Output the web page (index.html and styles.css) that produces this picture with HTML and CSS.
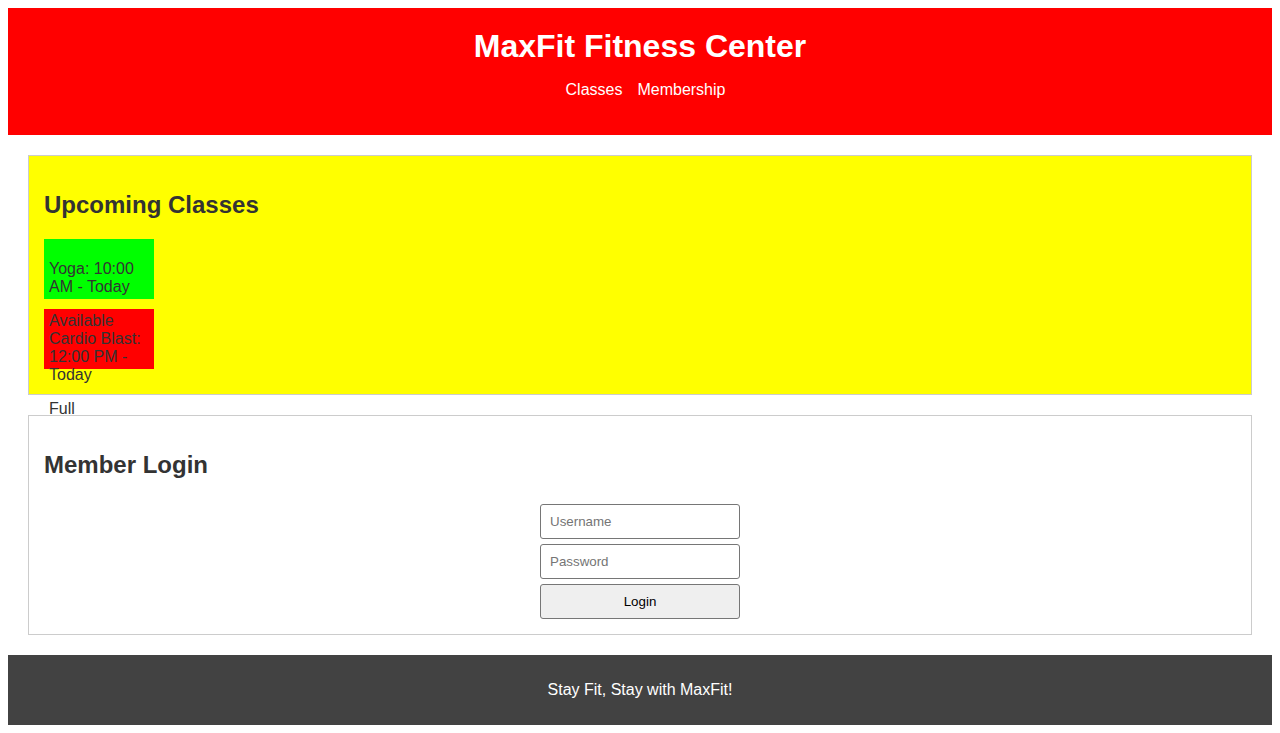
FILE: index.html
```html
<!DOCTYPE html>
<html lang="en">
<head>
<meta charset="utf-8">
<title>MaxFit Fitness Center</title>
<link rel="stylesheet" href="styles.css">
</head>
<body>
<header class="site-header">
  <h1 class="site-title">MaxFit Fitness Center</h1>
  <nav>
    <ul class="nav-list">
      <li><a href="#classes">Classes</a></li>
      <li><a href="#membership">Membership</a></li>
    </ul>
  </nav>
</header>
<main>
  <section class="panel panel-classes" id="classes">
    <h2 class="panel-title">Upcoming Classes</h2>
    <div class="class-card card-available">
      <p>Yoga: 10:00 AM - Today</p>
      <p>Available</p>
    </div>
    <div class="class-card card-full">
      <p>Cardio Blast: 12:00 PM - Today</p>
      <p>Full</p>
    </div>
  </section>
  <section class="panel panel-login" id="membership">
    <h2 class="panel-title">Member Login</h2>
    <form class="login-form">
      <input class="field" type="text" placeholder="Username">
      <input class="field" type="password" placeholder="Password">
      <button class="field login-btn" type="button">Login</button>
    </form>
  </section>
</main>
<footer class="site-footer">
  <p>Stay Fit, Stay with MaxFit!</p>
</footer>
</body>
</html>
```
FILE: styles.css
```css
body {
  margin: 8px;
  font-family: "Liberation Sans", Arial, sans-serif;
  font-size: 16px;
  color: #333;
}

.site-header {
  background: #ff0000;
  color: #fff;
  text-align: center;
  padding: 20px;
}

.site-title {
  margin: 0;
  font-size: 32px;
  font-weight: bold;
  line-height: 37px;
}

.nav-list {
  list-style: none;
  margin: 16px 0;
  padding: 0 0 0 11px;
  display: flex;
  justify-content: center;
  gap: 15px;
}

.nav-list a {
  color: #fff;
  text-decoration: none;
}

.panel {
  margin: 20px;
  padding: 15px;
  border: 1px solid #ccc;
}

.panel-classes {
  background: #ffff00;
}

.panel-login {
  background: #fff;
}

.panel-title {
  font-size: 24px;
  margin: 20px 0;
  line-height: 28px;
}

.class-card {
  width: 100px;
  height: 50px;
  padding: 5px;
  margin-bottom: 10px;
}

.class-card p {
  margin: 16px 0;
  line-height: 18px;
}

.card-available {
  background: #00ff00;
}

.card-full {
  background: #ff0000;
}

.login-form {
  margin: 0;
  padding-top: 5px;
  display: flex;
  flex-direction: column;
  align-items: center;
  gap: 5px;
}

.field {
  box-sizing: border-box;
  width: 200px;
  height: 35px;
  margin: 0;
  padding: 0 9px;
  font-family: "Liberation Sans", Arial, sans-serif;
  font-size: 13.33px;
  border: 1px solid #767676;
  border-radius: 3px;
  background: #fff;
  color: #000;
}

.login-btn {
  background: #efefef;
  text-align: center;
}

.site-footer {
  background: #424242;
  color: #fff;
  text-align: center;
  padding: 10px;
}

.site-footer p {
  margin: 16px 0;
  line-height: 18px;
}
```
